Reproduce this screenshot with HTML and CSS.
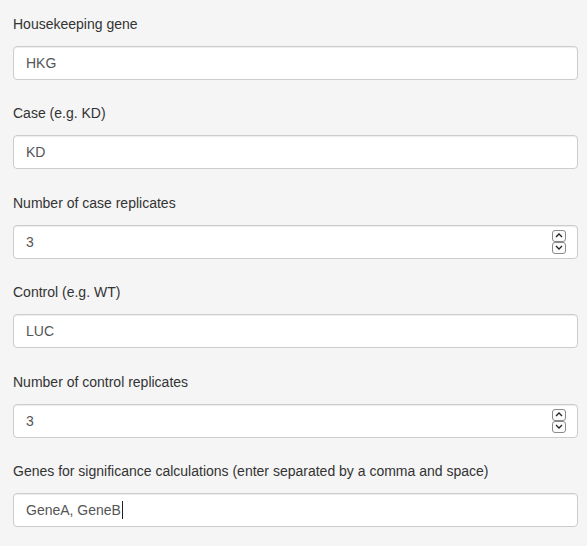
FILE: index.html
```html
<!DOCTYPE html>
<html>
<head>
<meta charset="utf-8">
<link rel="stylesheet" href="styles.css">
</head>
<body>
<div class="panel">
  <div class="group">
    <label class="lbl" for="hkg">Housekeeping gene</label>
    <input class="field" id="hkg" type="text" value="HKG">
  </div>
  <div class="group">
    <label class="lbl" for="case">Case (e.g. KD)</label>
    <input class="field" id="case" type="text" value="KD">
  </div>
  <div class="group">
    <label class="lbl" for="ncase">Number of case replicates</label>
    <div class="wrap">
      <input class="field num" id="ncase" type="number" value="3">
      <span class="spin" aria-hidden="true">
        <span class="spin-btn"><svg viewBox="0 0 8 5" width="8" height="5"><path d="M1 4 L4 1 L7 4" fill="none" stroke="#222" stroke-width="1.3"/></svg></span>
        <span class="spin-btn"><svg viewBox="0 0 8 5" width="8" height="5"><path d="M1 1 L4 4 L7 1" fill="none" stroke="#222" stroke-width="1.3"/></svg></span>
      </span>
    </div>
  </div>
  <div class="group">
    <label class="lbl" for="ctrl">Control (e.g. WT)</label>
    <input class="field" id="ctrl" type="text" value="LUC">
  </div>
  <div class="group">
    <label class="lbl" for="nctrl">Number of control replicates</label>
    <div class="wrap">
      <input class="field num" id="nctrl" type="number" value="3">
      <span class="spin" aria-hidden="true">
        <span class="spin-btn"><svg viewBox="0 0 8 5" width="8" height="5"><path d="M1 4 L4 1 L7 4" fill="none" stroke="#222" stroke-width="1.3"/></svg></span>
        <span class="spin-btn"><svg viewBox="0 0 8 5" width="8" height="5"><path d="M1 1 L4 4 L7 1" fill="none" stroke="#222" stroke-width="1.3"/></svg></span>
      </span>
    </div>
  </div>
  <div class="group">
    <label class="lbl" for="genes">Genes for significance calculations (enter separated by a comma and space)</label>
    <div class="wrap">
      <input class="field" id="genes" type="text" value="GeneA, GeneB">
      <span class="caret-line" aria-hidden="true"><span class="ghost">GeneA, GeneB</span></span>
    </div>
  </div>
</div>
</body>
</html>
```
FILE: styles.css
```css
html, body {
  margin: 0;
  padding: 0;
  background: #f5f5f5;
}
body {
  font-family: "Liberation Sans", Arial, sans-serif;
  font-size: 14px;
  line-height: 20px;
  color: #333;
}
.panel {
  display: flex;
  flex-direction: column;
  gap: 23.4px;
  padding: 14px 9px 0 13px;
}
.group {
  display: flex;
  flex-direction: column;
  gap: 12px;
}
.lbl {
  display: block;
  font-weight: normal;
  color: #333;
}
.wrap {
  position: relative;
}
.field {
  display: block;
  box-sizing: border-box;
  height: 34px;
  width: 100%;
  margin: 0;
  padding: 6px 12px;
  font-family: inherit;
  font-size: 14px;
  line-height: 20px;
  color: #555;
  background: #fff;
  border: 1px solid #ccc;
  border-radius: 4px;
  box-shadow: inset 0 1px 1px rgba(0,0,0,0.075);
}
.field:focus {
  outline: none;
}
.num {
  -moz-appearance: textfield;
}
.num::-webkit-inner-spin-button,
.num::-webkit-outer-spin-button {
  -webkit-appearance: none;
  margin: 0;
}
.spin {
  position: absolute;
  right: 12px;
  top: 5px;
  width: 14px;
  display: flex;
  flex-direction: column;
}
.spin-btn {
  box-sizing: border-box;
  height: 12px;
  display: flex;
  align-items: center;
  justify-content: center;
  border: 1px solid #8a8a8a;
  border-radius: 3px;
  background: #fbfbfb;
}
.caret-line {
  position: absolute;
  left: 13px;
  top: 7px;
  font-size: 14px;
  line-height: 18px;
  pointer-events: none;
}
.ghost {
  visibility: hidden;
}
.caret-line::after {
  content: "";
  position: absolute;
  right: -2px;
  top: 1px;
  width: 1px;
  height: 18px;
  background: #222;
}
```
